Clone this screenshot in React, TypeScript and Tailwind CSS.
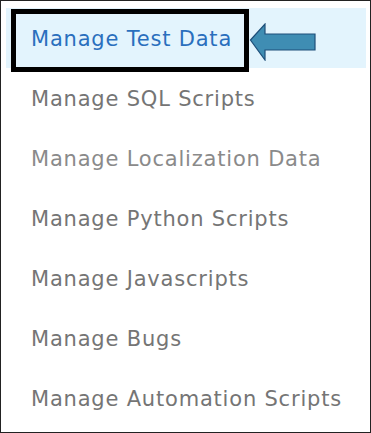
const items = [
  "Manage SQL Scripts",
  "Manage Localization Data",
  "Manage Python Scripts",
  "Manage Javascripts",
  "Manage Bugs",
  "Manage Automation Scripts",
];

export default function App() {
  return (
    <div className="relative h-[433px] w-[371px] border border-[#222] bg-white pt-[7px] pl-[5px] pr-[4px] font-['DejaVu_Sans',sans-serif]">
      <ul>
        <li className="flex h-[60px] items-center bg-[#e3f4fd] pt-[3px] pl-[25px] text-[21px] tracking-[0.8px] text-[#2a6fbd]">
          Manage Test Data
        </li>
        {items.map((label) => (
          <li
            key={label}
            className={`flex h-[60px] items-center pt-[3px] pl-[25px] text-[21px] tracking-[0.8px] ${
              label === "Manage Localization Data" ? "text-[#8a8a8a]" : "text-[#757575]"
            }`}
          >
            {label}
          </li>
        ))}
      </ul>

      {/* callout box + arrow over the first row */}
      <div className="absolute left-[10px] top-[8px] h-[63px] w-[238px] border-[5px] border-black" />
      <svg
        className="absolute left-[248px] top-[22px]"
        width="68"
        height="38"
        viewBox="0 0 68 38"
      >
        <path
          d="M1.5 17 L16 1 L16 11 L66 11 L66 27 L16 27 L16 37 Z"
          fill="#3f8db3"
          stroke="#1e4f7a"
          strokeWidth="1.2"
          strokeLinejoin="miter"
        />
      </svg>
    </div>
  );
}
